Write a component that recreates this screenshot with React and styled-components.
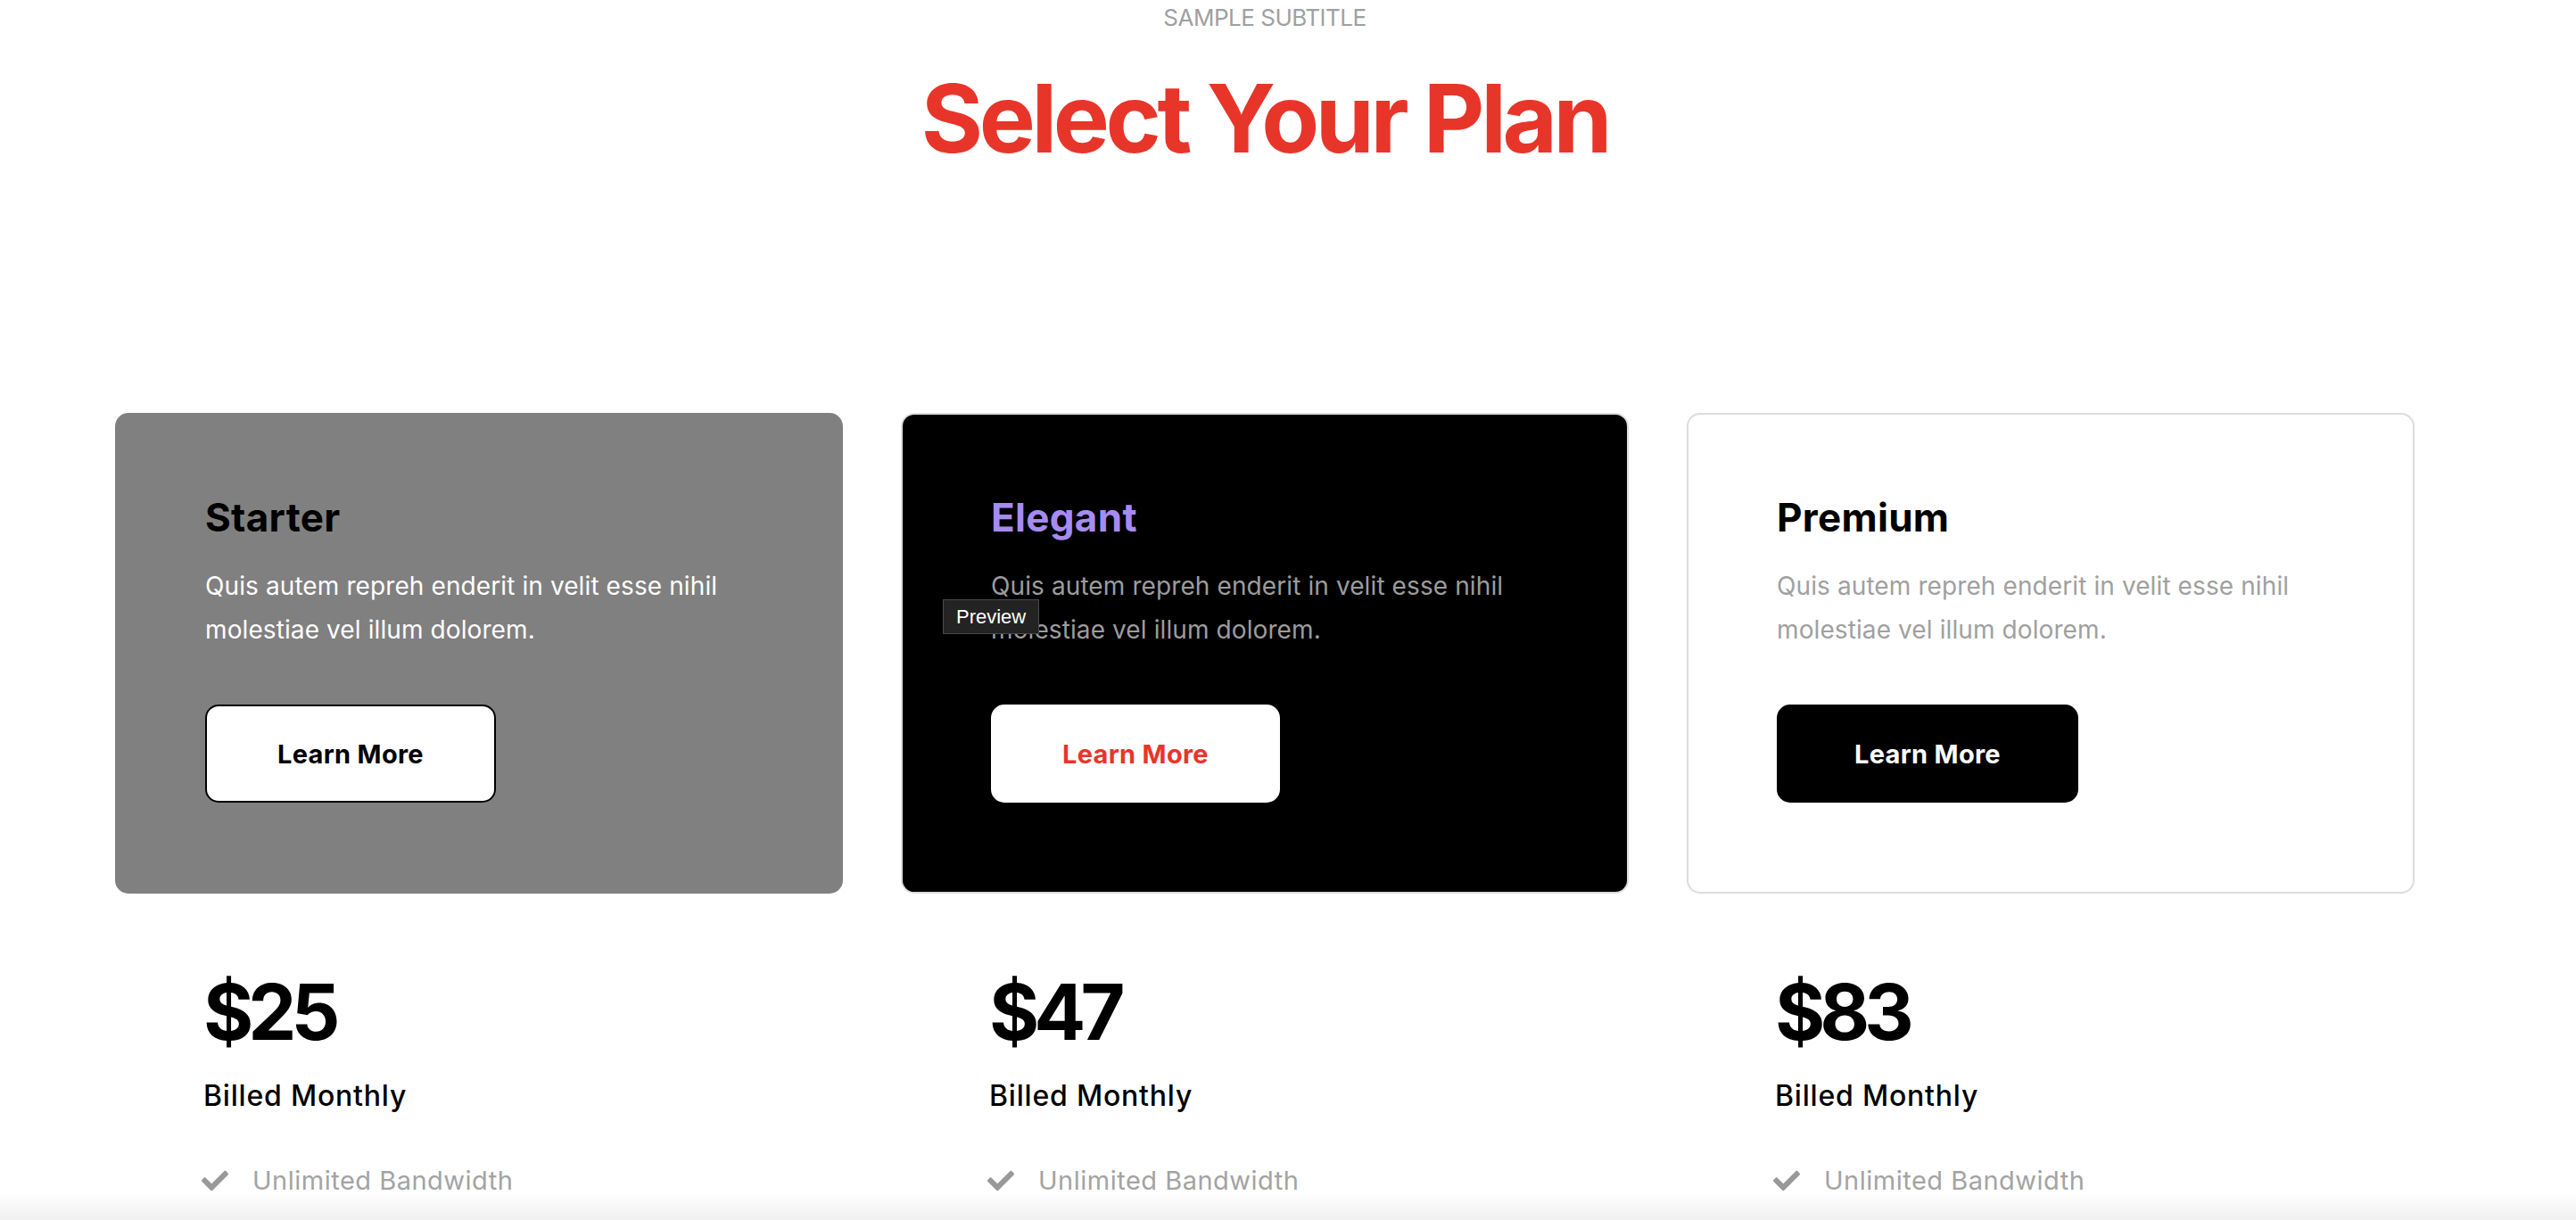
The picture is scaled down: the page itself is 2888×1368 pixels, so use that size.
import styled, { createGlobalStyle } from "styled-components";
import { FaCheck } from "react-icons/fa";

const GlobalStyle = createGlobalStyle`
  html, body {
    margin: 0;
    padding: 0;
    height: 1368px;
    overflow: hidden;
    background: #ffffff;
  }
  body {
    font-family: Inter, "Noto Sans", "Liberation Sans", sans-serif;
    color: #000;
  }
`;

const Page = styled.div`
  width: 2836px;
  display: flex;
  flex-direction: column;
  align-items: center;
`;

const Subtitle = styled.div`
  margin-top: 2px;
  font-size: 26px;
  line-height: 36px;
  color: #a0a0a0;
  letter-spacing: -0.5px;
  text-transform: uppercase;
`;

const Title = styled.h1`
  margin: 31px 0 0;
  font-size: 106px;
  line-height: 127px;
  font-weight: 700;
  letter-spacing: -4.4px;
  color: #e8352a;
`;

const Plans = styled.div`
  margin-top: 267px;
  width: 2578px;
  display: grid;
  grid-template-columns: repeat(3, 816px);
  column-gap: 65px;
`;

const Column = styled.div`
  display: flex;
  flex-direction: column;
`;

const Card = styled.div`
  position: relative;
  box-sizing: border-box;
  height: 539px;
  padding: 91px 100px 100px 99px;
  border-radius: 15px;
  background: ${(p) => p.$bg};
  border: 2px solid ${(p) => p.$border || p.$bg};
  display: flex;
  flex-direction: column;
  align-items: flex-start;
`;

const PlanName = styled.h2`
  margin: -2px 0 0;
  font-size: 44px;
  line-height: 53px;
  font-weight: 700;
  letter-spacing: 0.3px;
  color: ${(p) => p.$color};
`;

const Blurb = styled.p`
  margin: 26px 0 0;
  max-width: 625px;
  font-size: 28px;
  line-height: 49px;
  font-weight: 400;
  letter-spacing: 0.1px;
  color: ${(p) => p.$color};
`;

const LearnButton = styled.button`
  margin-top: 59px;
  box-sizing: border-box;
  width: ${(p) => p.$width}px;
  height: 112px;
  border-radius: 15px;
  border: 2px solid ${(p) => p.$border};
  background: ${(p) => p.$bg};
  color: ${(p) => p.$color};
  font-family: inherit;
  font-size: 29px;
  font-weight: 700;
  letter-spacing: 0.3px;
  cursor: pointer;
`;

const Tip = styled.div`
  position: absolute;
  left: 45px;
  top: 207px;
  padding: 0 14px;
  height: 37px;
  display: flex;
  align-items: center;
  background: #232323;
  border: 1px solid #4a4a4a;
  color: #fff;
  font-family: "Liberation Sans", Arial, sans-serif;
  font-size: 22px;
`;

const PriceBlock = styled.div`
  padding: 80px 0 0 99px;
  display: flex;
  flex-direction: column;
`;

const Price = styled.div`
  font-size: 86px;
  line-height: 106px;
  font-weight: 700;
  letter-spacing: -6px;
`;

const Billing = styled.div`
  margin-top: 22px;
  font-size: 32px;
  line-height: 38px;
  font-weight: 500;
  letter-spacing: 0.8px;
`;

const Features = styled.ul`
  margin: 58px 0 0;
  padding: 0;
  list-style: none;
  display: flex;
  flex-direction: column;
  gap: 30px;
`;

const Feature = styled.li`
  display: flex;
  align-items: center;
  gap: 27px;
  font-size: 29px;
  line-height: 35px;
  color: #a3a3a3;
  letter-spacing: 0.5px;
  svg {
    color: #999;
    flex: none;
    margin-left: -2px;
  }
`;

const BottomFade = styled.div`
  position: fixed;
  left: 0;
  right: 0;
  bottom: 0;
  height: 30px;
  background: linear-gradient(to bottom, rgba(240, 240, 240, 0), #f0f0f0);
  pointer-events: none;
`;

const plans = [
  {
    name: "Starter",
    price: "$25",
    bg: "#808080",
    nameColor: "#000",
    textColor: "#fff",
    button: { bg: "#fff", border: "#000", color: "#000", width: 326 },
  },
  {
    name: "Elegant",
    price: "$47",
    bg: "#000",
    border: "#dcdcdc",
    nameColor: "#a78bf0",
    textColor: "#9c9c9c",
    button: { bg: "#fff", border: "#fff", color: "#e8352a", width: 324 },
    tip: true,
  },
  {
    name: "Premium",
    price: "$83",
    bg: "#fff",
    border: "#dcdcdc",
    nameColor: "#000",
    textColor: "#a0a0a0",
    button: { bg: "#000", border: "#000", color: "#fff", width: 338 },
  },
];

const features = ["Unlimited Bandwidth", "Encrypted Connection", "No Traffic Logs"];

export default function App() {
  return (
    <>
      <GlobalStyle />
      <Page>
        <Subtitle>Sample Subtitle</Subtitle>
        <Title>Select Your Plan</Title>
        <Plans>
          {plans.map((plan) => (
            <Column key={plan.name}>
              <Card $bg={plan.bg} $border={plan.border}>
                <PlanName $color={plan.nameColor}>{plan.name}</PlanName>
                <Blurb $color={plan.textColor}>
                  Quis autem repreh enderit in velit esse nihil molestiae vel illum dolorem.
                </Blurb>
                <LearnButton
                  $bg={plan.button.bg}
                  $border={plan.button.border}
                  $color={plan.button.color}
                  $width={plan.button.width}
                >
                  Learn More
                </LearnButton>
                {plan.tip && <Tip>Preview</Tip>}
              </Card>
              <PriceBlock>
                <Price>{plan.price}</Price>
                <Billing>Billed Monthly</Billing>
                <Features>
                  {features.map((f) => (
                    <Feature key={f}>
                      <FaCheck size={30} />
                      {f}
                    </Feature>
                  ))}
                </Features>
              </PriceBlock>
            </Column>
          ))}
        </Plans>
      </Page>
      <BottomFade />
    </>
  );
}
